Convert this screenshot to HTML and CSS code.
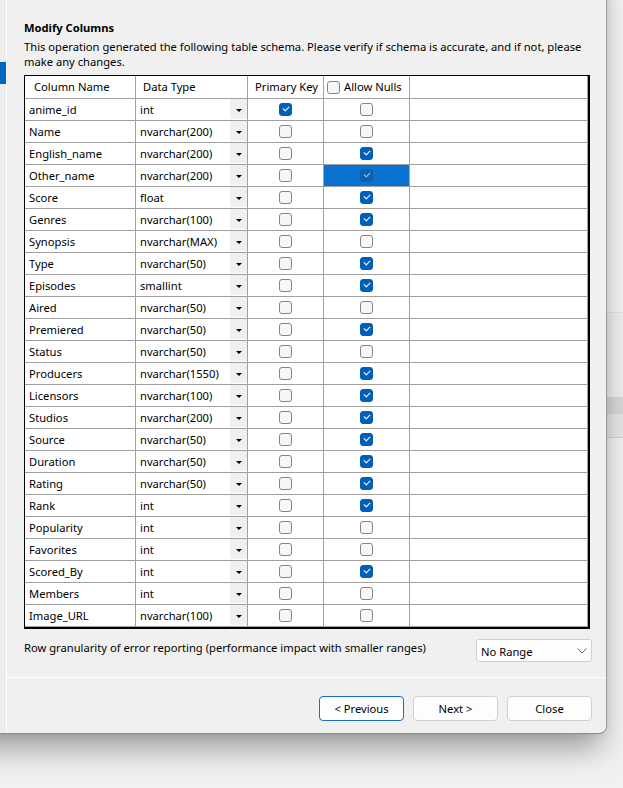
FILE: index.html
```html
<!DOCTYPE html>
<html>
<head>
<meta charset="utf-8">
<link rel="stylesheet" href="styles.css">
</head>
<body>
<div class="dialog">
  <div class="sidebar"><div class="nav-sel"></div></div>
  <div class="main">
    <div class="content">
      <div class="title">Modify Columns</div>
      <div class="desc">This operation generated the following table schema. Please verify if schema is accurate, and if not, please<br>make any changes.</div>
      <div class="table">
        <div class="row head">
          <div class="cell h1">Column Name</div>
          <div class="cell h2">Data Type</div>
          <div class="cell h3">Primary Key</div>
          <div class="cell h4"><span class="cb"></span>Allow Nulls</div>
          <div class="cell"></div>
        </div>
        <div class="row"><div class="cell name">anime_id</div><div class="cell type"><span>int</span><span class="dd"></span></div><div class="cell chk"><span class="cb on"></span></div><div class="cell chk"><span class="cb"></span></div><div class="cell"></div></div>
        <div class="row"><div class="cell name">Name</div><div class="cell type"><span>nvarchar(200)</span><span class="dd"></span></div><div class="cell chk"><span class="cb"></span></div><div class="cell chk"><span class="cb"></span></div><div class="cell"></div></div>
        <div class="row"><div class="cell name">English_name</div><div class="cell type"><span>nvarchar(200)</span><span class="dd"></span></div><div class="cell chk"><span class="cb"></span></div><div class="cell chk"><span class="cb on"></span></div><div class="cell"></div></div>
        <div class="row"><div class="cell name">Other_name</div><div class="cell type"><span>nvarchar(200)</span><span class="dd"></span></div><div class="cell chk"><span class="cb"></span></div><div class="cell chk sel"><span class="cb on"></span></div><div class="cell"></div></div>
        <div class="row"><div class="cell name">Score</div><div class="cell type"><span>float</span><span class="dd"></span></div><div class="cell chk"><span class="cb"></span></div><div class="cell chk"><span class="cb on"></span></div><div class="cell"></div></div>
        <div class="row"><div class="cell name">Genres</div><div class="cell type"><span>nvarchar(100)</span><span class="dd"></span></div><div class="cell chk"><span class="cb"></span></div><div class="cell chk"><span class="cb on"></span></div><div class="cell"></div></div>
        <div class="row"><div class="cell name">Synopsis</div><div class="cell type"><span>nvarchar(MAX)</span><span class="dd"></span></div><div class="cell chk"><span class="cb"></span></div><div class="cell chk"><span class="cb"></span></div><div class="cell"></div></div>
        <div class="row"><div class="cell name">Type</div><div class="cell type"><span>nvarchar(50)</span><span class="dd"></span></div><div class="cell chk"><span class="cb"></span></div><div class="cell chk"><span class="cb on"></span></div><div class="cell"></div></div>
        <div class="row"><div class="cell name">Episodes</div><div class="cell type"><span>smallint</span><span class="dd"></span></div><div class="cell chk"><span class="cb"></span></div><div class="cell chk"><span class="cb on"></span></div><div class="cell"></div></div>
        <div class="row"><div class="cell name">Aired</div><div class="cell type"><span>nvarchar(50)</span><span class="dd"></span></div><div class="cell chk"><span class="cb"></span></div><div class="cell chk"><span class="cb"></span></div><div class="cell"></div></div>
        <div class="row"><div class="cell name">Premiered</div><div class="cell type"><span>nvarchar(50)</span><span class="dd"></span></div><div class="cell chk"><span class="cb"></span></div><div class="cell chk"><span class="cb on"></span></div><div class="cell"></div></div>
        <div class="row"><div class="cell name">Status</div><div class="cell type"><span>nvarchar(50)</span><span class="dd"></span></div><div class="cell chk"><span class="cb"></span></div><div class="cell chk"><span class="cb"></span></div><div class="cell"></div></div>
        <div class="row"><div class="cell name">Producers</div><div class="cell type"><span>nvarchar(1550)</span><span class="dd"></span></div><div class="cell chk"><span class="cb"></span></div><div class="cell chk"><span class="cb on"></span></div><div class="cell"></div></div>
        <div class="row"><div class="cell name">Licensors</div><div class="cell type"><span>nvarchar(100)</span><span class="dd"></span></div><div class="cell chk"><span class="cb"></span></div><div class="cell chk"><span class="cb on"></span></div><div class="cell"></div></div>
        <div class="row"><div class="cell name">Studios</div><div class="cell type"><span>nvarchar(200)</span><span class="dd"></span></div><div class="cell chk"><span class="cb"></span></div><div class="cell chk"><span class="cb on"></span></div><div class="cell"></div></div>
        <div class="row"><div class="cell name">Source</div><div class="cell type"><span>nvarchar(50)</span><span class="dd"></span></div><div class="cell chk"><span class="cb"></span></div><div class="cell chk"><span class="cb on"></span></div><div class="cell"></div></div>
        <div class="row"><div class="cell name">Duration</div><div class="cell type"><span>nvarchar(50)</span><span class="dd"></span></div><div class="cell chk"><span class="cb"></span></div><div class="cell chk"><span class="cb on"></span></div><div class="cell"></div></div>
        <div class="row"><div class="cell name">Rating</div><div class="cell type"><span>nvarchar(50)</span><span class="dd"></span></div><div class="cell chk"><span class="cb"></span></div><div class="cell chk"><span class="cb on"></span></div><div class="cell"></div></div>
        <div class="row"><div class="cell name">Rank</div><div class="cell type"><span>int</span><span class="dd"></span></div><div class="cell chk"><span class="cb"></span></div><div class="cell chk"><span class="cb on"></span></div><div class="cell"></div></div>
        <div class="row"><div class="cell name">Popularity</div><div class="cell type"><span>int</span><span class="dd"></span></div><div class="cell chk"><span class="cb"></span></div><div class="cell chk"><span class="cb"></span></div><div class="cell"></div></div>
        <div class="row"><div class="cell name">Favorites</div><div class="cell type"><span>int</span><span class="dd"></span></div><div class="cell chk"><span class="cb"></span></div><div class="cell chk"><span class="cb"></span></div><div class="cell"></div></div>
        <div class="row"><div class="cell name">Scored_By</div><div class="cell type"><span>int</span><span class="dd"></span></div><div class="cell chk"><span class="cb"></span></div><div class="cell chk"><span class="cb on"></span></div><div class="cell"></div></div>
        <div class="row"><div class="cell name">Members</div><div class="cell type"><span>int</span><span class="dd"></span></div><div class="cell chk"><span class="cb"></span></div><div class="cell chk"><span class="cb"></span></div><div class="cell"></div></div>
        <div class="row"><div class="cell name">Image_URL</div><div class="cell type"><span>nvarchar(100)</span><span class="dd"></span></div><div class="cell chk"><span class="cb"></span></div><div class="cell chk"><span class="cb"></span></div><div class="cell"></div></div>
      </div>
      <div class="options">
        <div class="opt-label">Row granularity of error reporting (performance impact with smaller ranges)</div>
        <div class="select"><span>No Range</span><svg width="10" height="6" viewBox="0 0 10 6"><polyline points="0.5,0.5 5,5 9.5,0.5" fill="none" stroke="#6a6a6a" stroke-width="1"/></svg></div>
      </div>
    </div>
    <div class="footer">
      <button class="btn primary">&lt; Previous</button>
      <button class="btn">Next &gt;</button>
      <button class="btn">Close</button>
    </div>
  </div>
</div>
</body>
</html>
```
FILE: styles.css
```css
html, body {
  margin: 0;
  padding: 0;
}
body {
  width: 623px;
  height: 788px;
  overflow: hidden;
  font-family: "Noto Sans", "Open Sans", sans-serif;
  font-size: 11.2px;
  color: #000;
  background: linear-gradient(to bottom,
    #f3f3f3 0, #f3f3f3 312px,
    #dde2e8 312px, #dde2e8 313px,
    #eeeeee 313px, #eeeeee 397px,
    #d7d7d7 397px, #d7d7d7 414px,
    #e5e5e5 414px, #e5e5e5 437px,
    #d2d2d2 437px, #d2d2d2 438px,
    #f1f1f1 438px);
}
.dialog {
  display: flex;
  margin: -40px 0 0 -40px;
  width: 646px;
  height: 773px;
  background: #f0f0f0;
  border-right: 1px solid #9a9a9a;
  border-bottom: 1px solid #8c8c8c;
  border-bottom-right-radius: 8px;
  box-shadow: 0 20px 30px -6px rgba(0, 0, 0, 0.36), 0 0 8px rgba(0, 0, 0, 0.08);
}
.sidebar {
  width: 47px;
  flex: none;
  background: #ededed;
  border-right: 1px solid #ffffff;
  padding-top: 102px;
  box-sizing: border-box;
}
.nav-sel {
  height: 22px;
  background: #0067c0;
}
.main {
  flex: 1;
  display: flex;
  flex-direction: column;
  min-width: 0;
}
.content {
  padding: 60px 16px 0 17px;
}
.title {
  font-weight: bold;
  line-height: 16px;
}
.desc {
  margin-top: 3px;
  line-height: 15px;
  white-space: nowrap;
}
.table {
  margin-top: 6px;
  width: 566px;
  box-sizing: border-box;
  background: #fff;
  border-top: 1px solid #000;
  border-left: 1px solid #000;
  border-right: 2px solid #000;
  border-bottom: 2px solid #000;
}
.row {
  display: grid;
  grid-template-columns: 111px 112px 76px 86px 1fr;
  height: 22px;
}
.row.head {
  height: 23px;
}
.cell {
  box-sizing: border-box;
  border-right: 1px solid #a0a0a0;
  border-bottom: 1px solid #a0a0a0;
  line-height: 21px;
  white-space: nowrap;
  overflow: hidden;
}
.row.head .cell {
  line-height: 22px;
}
.h1 { padding-left: 9px; }
.h2 { padding-left: 7px; }
.h3 { padding-left: 7px; }
.h4 {
  display: flex;
  align-items: center;
  gap: 4px;
  padding-left: 3px;
}
.name { padding-left: 4px; }
.type {
  display: flex;
  justify-content: space-between;
  padding-left: 4px;
}
.dd {
  width: 17px;
  height: 20px;
  background: #f0f0f0;
  display: flex;
  align-items: center;
  justify-content: center;
  flex: none;
}
.dd::after {
  content: "";
  width: 0;
  height: 0;
  border-left: 3px solid transparent;
  border-right: 3px solid transparent;
  border-top: 3px solid #000;
  margin-top: 2px;
}
.chk {
  display: flex;
  align-items: center;
  justify-content: center;
}
.chk.sel {
  background: #0a72d1;
}
.cb {
  width: 13px;
  height: 13px;
  box-sizing: border-box;
  border: 1px solid #858585;
  border-radius: 3px;
  background: #f7f7f7;
  flex: none;
  position: relative;
}
.cb.on {
  background: #005fb8;
  border-color: #005fb8;
}
.cb.on::after {
  content: "";
  position: absolute;
  left: 3px;
  top: 2px;
  width: 5px;
  height: 3px;
  border-left: 1px solid #fff;
  border-bottom: 1px solid #fff;
  transform: rotate(-45deg);
}
.sel .cb.on {
  background: #0a5fae;
  border-color: #0a5fae;
}
.sel .cb.on::after {
  border-color: #9cc4ea;
}
.options {
  display: flex;
  justify-content: space-between;
  align-items: flex-start;
  margin-top: 10px;
  margin-right: -2px;
}
.opt-label {
  line-height: 15px;
  padding-top: 1px;
}
.select {
  width: 116px;
  height: 23px;
  box-sizing: border-box;
  border: 1px solid #d0d0d0;
  border-radius: 3px;
  background: #fdfdfd;
  display: flex;
  align-items: center;
  justify-content: space-between;
  padding: 1px 4px 0 4px;
}
.select svg {
  margin-top: -1px;
}
.footer {
  margin-top: 15px;
  border-top: 1px solid #ffffff;
  padding: 18px 14px 0 0;
  display: flex;
  justify-content: flex-end;
  gap: 9px;
}
.btn {
  width: 85px;
  height: 25px;
  box-sizing: border-box;
  border: 1px solid #d0d0d0;
  border-radius: 4px;
  background: #fdfdfd;
  font-family: inherit;
  font-size: 11.2px;
  color: #000;
  padding: 0;
}
.btn.primary {
  border-color: #1a6fc4;
}
```
